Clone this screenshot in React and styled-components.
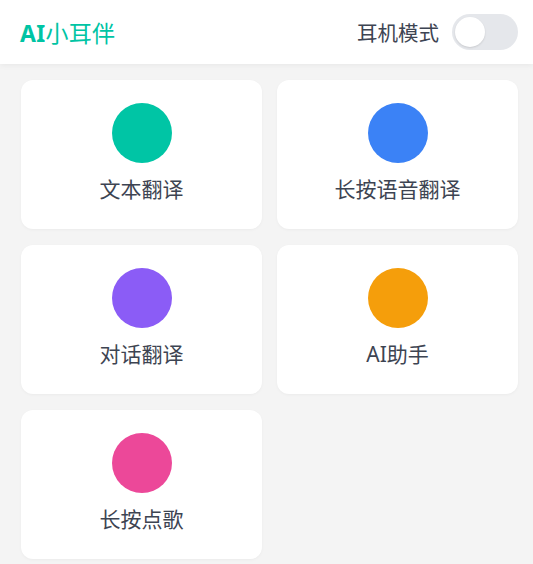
import styled, { createGlobalStyle } from "styled-components";
import { useState } from "react";

const GlobalStyle = createGlobalStyle`
    html, body {
        margin: 0;
        padding: 0;
        background: #f4f4f4;
        font-family: "Noto Sans", "Noto Sans CJK SC", sans-serif;
    }
`

const Page = styled.div`
    min-height: 100vh;
    background: #f4f4f4;
`

const Header = styled.header`
    height: 64px;
    background: #ffffff;
    display: flex;
    align-items: center;
    justify-content: space-between;
    padding: 0 15px 0 20px;
    box-shadow: 0 1px 6px rgba(0, 0, 0, 0.06);
    position: relative;
`

const Title = styled.h1`
    margin: 0;
    font-size: 23px;
    font-weight: 400;
    color: #00c4a4;
    letter-spacing: 0.3px;

    b {
        font-weight: 700;
    }
`

const ModeBox = styled.div`
    display: flex;
    align-items: center;
    gap: 13px;
`

const ModeLabel = styled.span`
    font-size: 20.5px;
    color: #3d4452;
`

const Toggle = styled.button`
    width: 66px;
    height: 36px;
    border: 0;
    border-radius: 18px;
    padding: 3px;
    background: ${p => p.on ? "#00c4a4" : "#e5e7eb"};
    cursor: pointer;
    display: flex;
    justify-content: ${p => p.on ? "flex-end" : "flex-start"};
`

const Knob = styled.span`
    width: 30px;
    height: 30px;
    border-radius: 50%;
    background: #ffffff;
    box-shadow: 0 1px 2px rgba(0, 0, 0, 0.12);
`

const Grid = styled.div`
    display: grid;
    grid-template-columns: 241px 241px;
    gap: 16px 15px;
    padding: 16px 15px 0 21px;
`

const Card = styled.div`
    background: #ffffff;
    border-radius: 12px;
    box-shadow: 0 1px 3px rgba(0, 0, 0, 0.04);
    display: flex;
    flex-direction: column;
    align-items: center;
    padding: 23px 0 26px;
    gap: 12px;
    cursor: pointer;
`

const Dot = styled.div`
    width: 60px;
    height: 60px;
    border-radius: 50%;
    background: ${p => p.color};
`

const Label = styled.div`
    font-size: 21px;
    line-height: 28px;
    color: #3d4452;
`

const items = [
    { name: "文本翻译", color: "#00c5a5" },
    { name: "长按语音翻译", color: "#3b82f6" },
    { name: "对话翻译", color: "#8b5cf6" },
    { name: "AI助手", color: "#f59e0b" },
    { name: "长按点歌", color: "#ec4899" },
]

export default function App() {
    const [on, setOn] = useState(false)

    return <Page>
        <GlobalStyle />
        <Header>
            <Title><b>AI</b>小耳伴</Title>
            <ModeBox>
                <ModeLabel>耳机模式</ModeLabel>
                <Toggle on={on} onClick={() => setOn(!on)}><Knob /></Toggle>
            </ModeBox>
        </Header>
        <Grid>
            {items.map(it => (
                <Card key={it.name}>
                    <Dot color={it.color} />
                    <Label>{it.name}</Label>
                </Card>
            ))}
        </Grid>
    </Page>
}
